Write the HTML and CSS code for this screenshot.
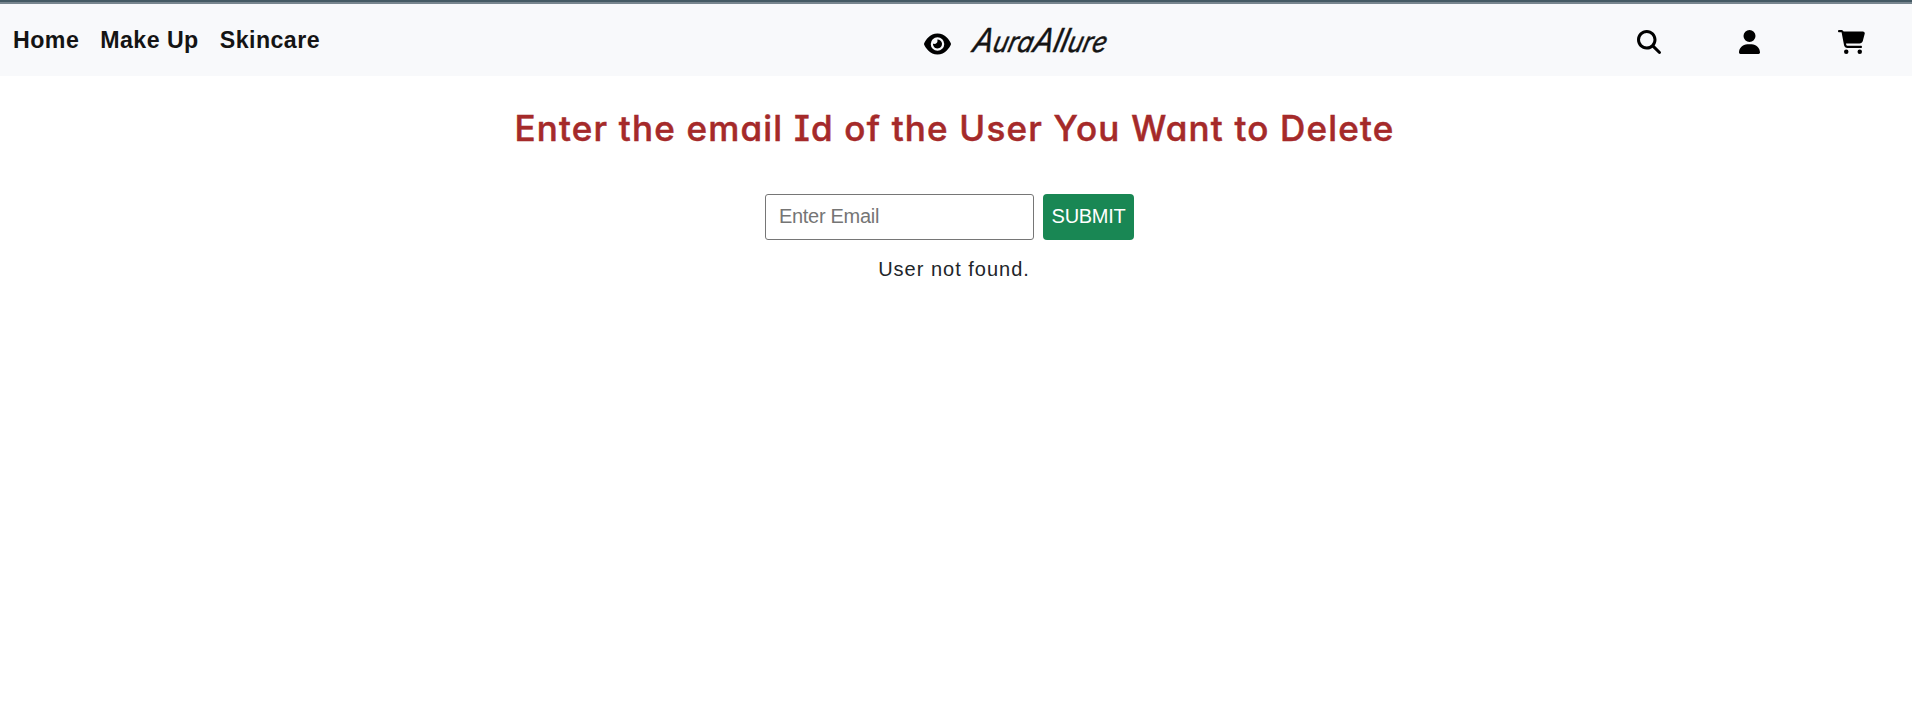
FILE: index.html
```html
<!DOCTYPE html>
<html lang="en">
<head>
<meta charset="utf-8">
<title>AuraAllure</title>
<link rel="stylesheet" href="styles.css">
</head>
<body>
<header class="navbar">
  <nav class="links"><a>Home</a><a>Make Up</a><a>Skincare</a></nav>
  <div class="brand">
    <svg class="eye" viewBox="0 0 576 512"><path d="M288 32c-80.800 0-145.500 36.800-192.600 80.600C48.600 156 17.300 208 2.500 243.700c-3.300 7.900-3.300 16.700 0 24.600C17.300 304 48.600 356 95.400 399.400C142.500 443.200 207.200 480 288 480s145.500-36.800 192.600-80.600c46.800-43.500 78.100-95.400 93-131.100c3.300-7.900 3.300-16.700 0-24.600c-14.900-35.700-46.200-87.700-93-131.100C433.500 68.800 368.800 32 288 32zM144 256a144 144 0 1 1 288 0 144 144 0 1 1-288 0zm144-64c0 35.300-28.700 64-64 64c-7.100 0-13.900-1.200-20.300-3.300c-5.500-1.800-11.900 1.600-11.700 7.400c.3 6.900 1.300 13.800 3.200 20.700c13.700 51.200 66.400 81.600 117.600 67.900s81.600-66.400 67.900-117.600c-11.100-41.500-47.800-69.400-88.600-71.100c-5.800-.2-9.200 6.100-7.400 11.700c2.100 6.400 3.300 13.200 3.300 20.300z"/></svg>
    <svg class="wordmark" viewBox="0 0 150 50"><text x="0" y="36" transform="translate(8 0) skewX(-14)" textLength="134" lengthAdjust="spacingAndGlyphs">A<tspan class="low">ura</tspan>All<tspan class="low">ure</tspan></text></svg>
  </div>
  <div class="actions">
    <svg class="search" viewBox="0 0 512 512"><path d="M416 208c0 45.900-14.900 88.300-40 122.700L502.600 457.400c12.500 12.500 12.500 32.800 0 45.300s-32.800 12.500-45.300 0L330.700 376c-34.400 25.200-76.800 40-122.700 40C93.100 416 0 322.900 0 208S93.100 0 208 0S416 93.100 416 208zM208 352a144 144 0 1 0 0-288 144 144 0 1 0 0 288z"/></svg>
    <svg class="user" viewBox="0 0 448 512"><path d="M224 256A128 128 0 1 0 224 0a128 128 0 1 0 0 256zm-45.700 48C79.800 304 0 383.800 0 482.300C0 498.700 13.300 512 29.700 512H418.300c16.400 0 29.700-13.300 29.700-29.700C448 383.800 368.200 304 269.700 304H178.300z"/></svg>
    <svg class="cart" viewBox="0 0 576 512"><path d="M0 24C0 10.700 10.700 0 24 0H69.500c22 0 41.500 12.800 50.600 32h411c26.300 0 45.500 25 38.600 50.400l-41 152.300c-8.500 31.400-37 53.300-69.500 53.300H170.700l5.400 28.500c2.200 11.300 12.100 19.500 23.600 19.500H488c13.300 0 24 10.700 24 24s-10.700 24-24 24H199.700c-34.600 0-64.300-24.600-70.700-58.500L77.400 54.500c-.7-3.800-4-6.500-7.900-6.500H24C10.700 48 0 37.300 0 24zM128 464a48 48 0 1 1 96 0 48 48 0 1 1-96 0zm336-48a48 48 0 1 1 0 96 48 48 0 1 1 0-96z"/></svg>
  </div>
</header>
<main>
  <h1>Enter the email Id of the User You Want to Delete</h1>
  <form class="delete-form">
    <input type="text" placeholder="Enter Email">
    <button type="button">SUBMIT</button>
  </form>
  <p class="message">User not found.</p>
</main>
</body>
</html>
```
FILE: styles.css
```css
* { box-sizing: border-box; }
body {
  margin: 0;
  height: 711px;
  overflow: hidden;
  background: #fff;
  border-top: 2px solid #455a64;
  color: #212529;
  font-family: "Liberation Sans", Arial, sans-serif;
}
.navbar {
  display: grid;
  grid-template-columns: 924px 1fr 274.6px;
  height: 74px;
  border-top: 2px solid #78868f;
  background: #f8f9fb;
}
.links {
  display: flex;
  gap: 21px;
  padding: 22px 0 0 13px;
  color: #141414;
  font-size: 23.2px;
  font-weight: 700;
  line-height: 29px;
  letter-spacing: 0.45px;
}
.brand { display: flex; }
.eye { width: 27px; height: 24px; margin-top: 28px; }
.wordmark { width: 150px; height: 50px; margin: 12px 0 0 21px; overflow: visible; }
.wordmark text {
  fill: #141414;
  stroke: #141414;
  stroke-width: 0.5px;
  font-family: Inter, sans-serif;
  font-size: 33px;
  font-style: italic;
  font-feature-settings: "cv11" 1;
}
.wordmark .low { font-size: 28px; }
.actions { display: flex; padding-top: 26px; }
.actions svg { height: 24px; }
.search { width: 24px; }
.user { width: 21px; margin-left: 78px; }
.cart { width: 27px; margin-left: 78px; }
h1 {
  margin: 29px 0 0;
  padding-right: 3px;
  color: #a52a2a;
  font-family: Inter, sans-serif;
  font-size: 35px;
  font-weight: 550;
  font-feature-settings: "cv11" 1, "cv08" 1;
  -webkit-text-stroke: 0.5px #a52a2a;
  line-height: 47px;
  letter-spacing: 1.2px;
  text-align: center;
}
.delete-form {
  display: flex;
  gap: 9px;
  margin-top: 42px;
  padding-left: 765px;
}
input {
  width: 269px;
  height: 46px;
  padding: 0 13px 2px;
  border: 1px solid #767676;
  border-radius: 3px;
  font: 20px "Liberation Sans", Arial, sans-serif;
  letter-spacing: -0.3px;
}
input::placeholder { color: #757575; }
button {
  width: 91px;
  height: 46px;
  padding: 0 0 2px;
  border: 0;
  border-radius: 4px;
  background: #198754;
  color: #fff;
  font: 20px "Liberation Sans", Arial, sans-serif;
  letter-spacing: -0.3px;
}
.message {
  margin: 14px 0 0;
  padding-right: 4px;
  font-size: 20px;
  line-height: 30px;
  letter-spacing: 1px;
  text-align: center;
}
```
